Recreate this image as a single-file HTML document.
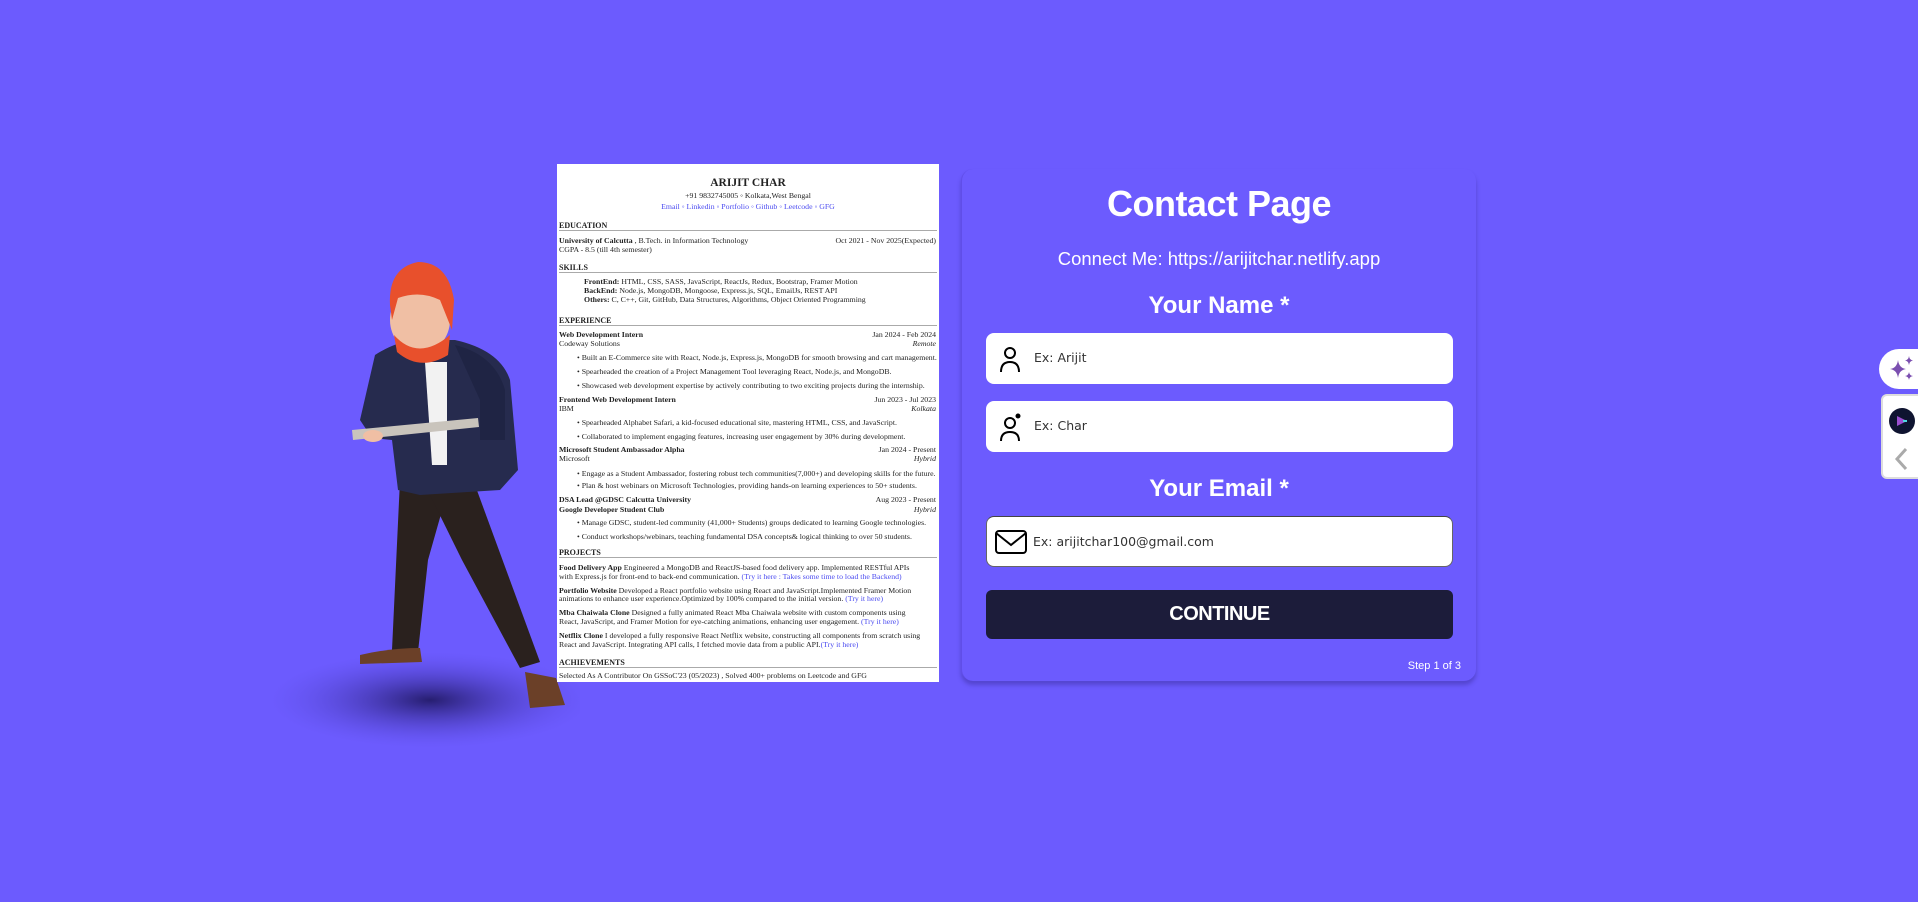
<!DOCTYPE html>
<html><head><meta charset="utf-8">
<style>
*{margin:0;padding:0;box-sizing:border-box}
html,body{width:1918px;height:902px;overflow:hidden;background:#6c5bfe;font-family:"Liberation Sans",sans-serif}
.abs{position:absolute}
#resume{position:absolute;left:557px;top:164px;width:382px;height:518px;background:#fff;font-family:"Liberation Serif",serif;color:#222;font-size:7.8px;white-space:nowrap;overflow:hidden}
#resume div{position:absolute;line-height:9px}
#resume .h{font-weight:bold;font-size:8px;left:2px}
#resume .r{left:2px;right:2px;height:1px;background:#555;border-bottom:1px solid #aaa}
#resume .b{font-weight:bold}
#resume a{color:#4b4bf0;text-decoration:none}
#resume .rt{right:3px}
#resume .bl{left:20px}
#resume .bl::before{content:"• ";}
#card{position:absolute;left:961px;top:169px;width:515px;height:512px;border-radius:12px;box-shadow:0 4px 4px rgba(40,30,120,.35);border-left:1px solid rgba(80,60,200,.4)}
.t{position:absolute;left:0;right:0;text-align:center;color:#fff}
.inp{position:absolute;left:24px;width:467px;height:51px;background:#fff;border-radius:8px}
.inp span{position:absolute;left:48px;top:17px;color:#333;font-family:"DejaVu Sans","Liberation Sans",sans-serif;font-size:12.5px}
.inp svg{position:absolute;left:10px;top:12px}
</style></head><body>

<svg class="abs" style="left:250px;top:240px" width="330" height="520" viewBox="250 240 330 520">
<defs><radialGradient id="sh"><stop offset="0" stop-color="#1f1760" stop-opacity=".9"/><stop offset="1" stop-color="#5a4ae0" stop-opacity="0"/></radialGradient></defs>
<ellipse cx="430" cy="700" rx="160" ry="48" fill="url(#sh)"/>
<path d="M400 480 L392 650 L418 652 L428 560 L445 500 Z" fill="#2a211e"/>
<path d="M425 485 L475 485 L540 662 L520 668 L462 560 Z" fill="#2a211e"/>
<path d="M360 655 Q390 648 420 648 L422 662 L360 664 Z" fill="#6b4028"/>
<path d="M525 672 L556 678 L565 705 L530 708 Z" fill="#6b4028"/>
<path d="M375 355 Q395 342 415 340 L455 340 Q500 350 510 380 L518 470 L500 490 L420 495 L398 490 L392 440 L372 438 L360 420 Z" fill="#262b4e"/>
<path d="M455 345 Q495 355 505 390 L505 440 L480 440 L480 400 Z" fill="#1f2444"/>
<path d="M425 362 L447 362 L447 465 L432 465 Z" fill="#f2f2f2"/>
<path d="M352 430 L478 418 L479 427 L353 440 Z" fill="#c9c4bc"/>
<ellipse cx="373" cy="436" rx="10" ry="6" fill="#f0bfa4"/>
<ellipse cx="420" cy="320" rx="30" ry="33" fill="#f0bfa4"/>
<path d="M390 305 Q388 268 418 262 Q448 262 454 300 L452 330 L440 300 Q420 290 398 298 L392 320 Z" fill="#e8502c"/>
<path d="M394 335 Q418 362 450 335 L448 355 Q420 372 397 352 Z" fill="#e8502c"/>
</svg>

<div id="resume">
<div class="b" style="top:13px;left:0;right:0;text-align:center;font-size:11.5px;line-height:12px">ARIJIT CHAR</div>
<div style="top:27px;left:0;right:0;text-align:center">+91 9832745005 ◦ Kolkata,West Bengal</div>
<div style="top:38px;left:0;right:0;text-align:center"><a>Email ◦ Linkedin ◦ Portfolio ◦ Github ◦ Leetcode ◦ GFG</a></div>
<div class="h" style="top:57px">EDUCATION</div><div class="r" style="top:66px"></div>
<div style="top:72px;left:2px"><span class="b">University of Calcutta</span> , B.Tech. in Information Technology</div><div class="rt" style="top:72px">Oct 2021 - Nov 2025(Expected)</div>
<div style="top:81px;left:2px">CGPA - 8.5 (till 4th semester)</div>
<div class="h" style="top:99px">SKILLS</div><div class="r" style="top:108px"></div>
<div style="top:113px;left:27px"><b>FrontEnd:</b> HTML, CSS, SASS, JavaScript, ReactJs, Redux, Bootstrap, Framer Motion</div>
<div style="top:122px;left:27px"><b>BackEnd:</b> Node.js, MongoDB, Mongoose, Express.js, SQL, EmailJs, REST API</div>
<div style="top:131px;left:27px"><b>Others:</b> C, C++, Git, GitHub, Data Structures, Algorithms, Object Oriented Programming</div>
<div class="h" style="top:152px">EXPERIENCE</div><div class="r" style="top:161px"></div>
<div class="b" style="top:166px;left:2px">Web Development Intern</div><div class="rt" style="top:166px">Jan 2024 - Feb 2024</div>
<div style="top:175px;left:2px">Codeway Solutions</div><div class="rt" style="top:175px"><i>Remote</i></div>
<div class="bl" style="top:189px">Built an E-Commerce site with React, Node.js, Express.js, MongoDB for smooth browsing and cart management.</div>
<div class="bl" style="top:203px">Spearheaded the creation of a Project Management Tool leveraging React, Node.js, and MongoDB.</div>
<div class="bl" style="top:217px">Showcased web development expertise by actively contributing to two exciting projects during the internship.</div>
<div class="b" style="top:231px;left:2px">Frontend Web Development Intern</div><div class="rt" style="top:231px">Jun 2023 - Jul 2023</div>
<div style="top:240px;left:2px">IBM</div><div class="rt" style="top:240px"><i>Kolkata</i></div>
<div class="bl" style="top:254px">Spearheaded Alphabet Safari, a kid-focused educational site, mastering HTML, CSS, and JavaScript.</div>
<div class="bl" style="top:268px">Collaborated to implement engaging features, increasing user engagement by 30% during development.</div>
<div class="b" style="top:281px;left:2px">Microsoft Student Ambassador Alpha</div><div class="rt" style="top:281px">Jan 2024 - Present</div>
<div style="top:290px;left:2px">Microsoft</div><div class="rt" style="top:290px"><i>Hybrid</i></div>
<div class="bl" style="top:305px">Engage as a Student Ambassador, fostering robust tech communities(7,000+) and developing skills for the future.</div>
<div class="bl" style="top:317px">Plan &amp; host webinars on Microsoft Technologies, providing hands-on learning experiences to 50+ students.</div>
<div class="b" style="top:331px;left:2px">DSA Lead @GDSC Calcutta University</div><div class="rt" style="top:331px">Aug 2023 - Present</div>
<div class="b" style="top:341px;left:2px">Google Developer Student Club</div><div class="rt" style="top:341px"><i>Hybrid</i></div>
<div class="bl" style="top:354px">Manage GDSC, student-led community (41,000+ Students) groups dedicated to learning Google technologies.</div>
<div class="bl" style="top:368px">Conduct workshops/webinars, teaching fundamental DSA concepts&amp; logical thinking to over 50 students.</div>
<div class="h" style="top:384px">PROJECTS</div><div class="r" style="top:393px"></div>
<div style="top:399px;left:2px"><b>Food Delivery App</b> Engineered a MongoDB and ReactJS-based food delivery app. Implemented RESTful APIs</div>
<div style="top:408px;left:2px">with Express.js for front-end to back-end communication. <a>(Try it here : Takes some time to load the Backend)</a></div>
<div style="top:422px;left:2px"><b>Portfolio Website</b> Developed a React portfolio website using React and JavaScript.Implemented Framer Motion</div>
<div style="top:430px;left:2px">animations to enhance user experience.Optimized by 100% compared to the initial version. <a>(Try it here)</a></div>
<div style="top:444px;left:2px"><b>Mba Chaiwala Clone</b> Designed a fully animated React Mba Chaiwala website with custom components using</div>
<div style="top:453px;left:2px">React, JavaScript, and Framer Motion for eye-catching animations, enhancing user engagement. <a>(Try it here)</a></div>
<div style="top:467px;left:2px"><b>Netflix Clone</b> I developed a fully responsive React Netflix website, constructing all components from scratch using</div>
<div style="top:476px;left:2px">React and JavaScript. Integrating API calls, I fetched movie data from a public API.<a>(Try it here)</a></div>
<div class="h" style="top:494px">ACHIEVEMENTS</div><div class="r" style="top:503px"></div>
<div style="top:507px;left:2px">Selected As A Contributor On GSSoC'23 (05/2023) , Solved 400+ problems on Leetcode and GFG</div>
</div>

<div id="card">
<div class="t" style="top:14px;font-size:36px;font-weight:bold;letter-spacing:-0.5px">Contact Page</div>
<div class="t" style="top:79px;font-size:18.5px">Connect Me: https://arijitchar.netlify.app</div>
<div class="t" style="top:123px;font-size:24px;font-weight:bold">Your Name *</div>
<div class="inp" style="top:164px"><svg width="28" height="28" viewBox="0 0 28 28" fill="none" stroke="#000" stroke-width="2"><circle cx="14" cy="8" r="5"/><path d="M5 27 Q5 17 14 17 Q23 17 23 27"/></svg><span>Ex: Arijit</span></div>
<div class="inp" style="top:232px"><svg width="28" height="28" viewBox="0 0 28 28" fill="none" stroke="#000" stroke-width="2"><circle cx="14" cy="10" r="5"/><circle cx="22" cy="3" r="1.5" fill="#000"/><path d="M5 28 Q5 19 14 19 Q23 19 23 28"/></svg><span>Ex: Char</span></div>
<div class="t" style="top:306px;font-size:24px;font-weight:bold">Your Email *</div>
<div class="inp" style="top:347px;border:1px solid #666;border-top-color:#444"><svg width="32" height="26" viewBox="0 0 32 26" fill="none" stroke="#000" stroke-width="2" style="left:8px"><rect x="1" y="2" width="30" height="22" rx="3"/><path d="M1 4 L16 16 L31 4"/></svg><span style="left:46px">Ex: arijitchar100@gmail.com</span></div>
<div class="abs" style="left:24px;top:421px;width:467px;height:49px;background:#1c1c3a;border-radius:6px;color:#fff;text-align:center;line-height:49px;font-size:20px;font-weight:bold;letter-spacing:-0.5px">CONTINUE</div>
<div class="abs" style="right:15px;top:491px;color:#fff;font-size:11px">Step 1 of 3</div>
</div>

<div class="abs" style="left:1879px;top:349px;width:50px;height:40px;background:#fff;border-radius:20px 0 0 20px">
<svg class="abs" style="left:8px;top:6px" width="30" height="28" viewBox="0 0 30 28" fill="#7b4fb0"><path d="M11 5 Q12 13 19 14 Q12 15 11 23 Q10 15 3 14 Q10 13 11 5Z"/><path d="M22 1 Q22.5 5 26 5.5 Q22.5 6 22 10 Q21.5 6 18 5.5 Q21.5 5 22 1Z"/><path d="M22 17 Q22.5 20.5 26 21 Q22.5 21.5 22 25 Q21.5 21.5 18 21 Q21.5 20.5 22 17Z"/></svg>
</div>
<div class="abs" style="left:1881px;top:394px;width:45px;height:85px;background:#fff;border:2px solid #ddd;border-radius:6px 0 0 6px">
<div class="abs" style="left:6px;top:12px;width:26px;height:26px;border-radius:50%;background:#0f1430"></div>
<svg class="abs" style="left:12px;top:18px" width="14" height="14" viewBox="0 0 14 14"><path d="M2 2 L12 7 L2 12Z" fill="#9b4fd0"/><path d="M8 7 h4" stroke="#4fd8e0" stroke-width="2"/></svg>
<svg class="abs" style="left:9px;top:50px" width="18" height="26" viewBox="0 0 18 26"><path d="M14 3 L5 13 L14 23" fill="none" stroke="#aaa" stroke-width="3"/></svg>
</div>
</body></html>
